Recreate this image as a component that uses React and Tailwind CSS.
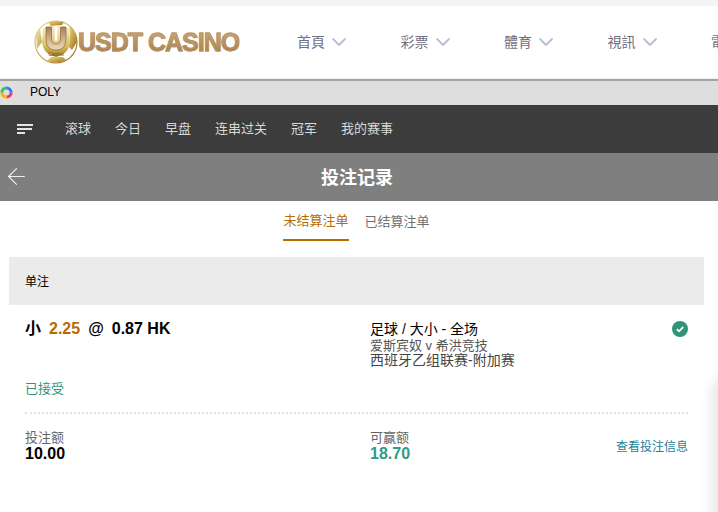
import React from 'react';
import { ChevronDown, ArrowLeft } from 'lucide-react';

const cjk = 'font-["Liberation_Sans","Noto_Sans_CJK_SC",sans-serif]';

const menu = ['首頁', '彩票', '體育', '視訊'];
const sports = ['滚球', '今日', '早盘', '连串过关', '冠军', '我的赛事'];

function Logo() {
  return (
    <div className="flex w-[206px] shrink-0 items-center">
      <svg width="44" height="44" viewBox="0 0 44 44" className="shrink-0">
        <defs>
          <linearGradient id="gold" x1="0" y1="0" x2="1" y2="1">
            <stop offset="0" stopColor="#ecd98f" />
            <stop offset="0.55" stopColor="#c4a245" />
            <stop offset="1" stopColor="#8c6a2a" />
          </linearGradient>
          <linearGradient id="inner" x1="0" y1="0" x2="0" y2="1">
            <stop offset="0" stopColor="#f7f0d8" />
            <stop offset="0.6" stopColor="#e0c264" />
            <stop offset="1" stopColor="#a98226" />
          </linearGradient>
          <linearGradient id="u" x1="0" y1="0" x2="0" y2="1">
            <stop offset="0" stopColor="#a9805a" />
            <stop offset="1" stopColor="#efdcc2" />
          </linearGradient>
        </defs>
        <circle cx="22" cy="22" r="21" fill="#fff" stroke="url(#gold)" strokeWidth="1.2" />
        <path d="M14 2 Q22 0 30 2 L28 5 L17 6 Z" fill="url(#gold)" />
        <path d="M2 16 L6 9 L8 22 L3 29 Z" fill="url(#gold)" opacity="0.7" />
        <path d="M35 5 Q42 12 43 22 L38 30 L34 26 L36 14 Z" fill="url(#gold)" />
        <path d="M13 41 L17 37 L29 37 L32 40 Q22 45 13 41 Z" fill="url(#gold)" />
        <path d="M9 8 Q22 3 35 8 L36 22 Q35 34 22 37 Q9 34 8 22 Z" fill="url(#inner)" />
        <path d="M12 7 L12 19 Q12 30 22 30 Q32 30 32 19 L32 7 L26.5 7 L26.5 19 Q26.5 24 22 24 Q17.5 24 17.5 19 L17.5 7 Z" fill="url(#u)" stroke="#7f5f2a" strokeWidth="0.6" />
        <rect x="20.7" y="6" width="2.6" height="15" rx="1" fill="#fff" />
        <text x="22" y="36" textAnchor="middle" fontSize="5" fill="#6b5a2a">Casino</text>
      </svg>
      <span className='bg-gradient-to-b from-[#cba97f] to-[#a67d4c] bg-clip-text font-["Liberation_Sans",sans-serif] text-[25px] leading-none font-bold tracking-[-1px] whitespace-nowrap text-transparent [-webkit-text-stroke:0.8px_#b8935f]'>
        USDT CASINO
      </span>
    </div>
  );
}

export default function App() {
  return (
    <div className={`relative h-[512px] w-[718px] overflow-hidden bg-white ${cjk}`}>
      <div className="h-1.5 bg-[#f4f4f4]" />

      {/* Site header */}
      <div className="flex h-[72px] items-center overflow-hidden pl-[34px]">
        <Logo />
        <div className="ml-[57px] flex shrink-0">
          {menu.map((m) => (
            <div key={m} className="flex w-[103.5px] items-center gap-0.5 text-sm text-[#6f6f80]">
              <span>{m}</span>
              <ChevronDown className="h-6 w-6 text-[#b9bdd6]" strokeWidth={1.8} />
            </div>
          ))}
          <div className="text-sm leading-6 whitespace-nowrap text-[#6f6f80]">電</div>
        </div>
      </div>

      <div className="h-[3px] border-b-2 border-[#a3a3a3] bg-[#efefef]" />

      {/* Iframe title */}
      <div className="flex h-6 items-center bg-[#dedede] pb-0.5">
        <svg width="13" height="13" viewBox="0 0 13 13" className="shrink-0">
          <circle cx="6.5" cy="6.5" r="4.6" fill="none" stroke="#ff2d6a" strokeWidth="3" strokeDasharray="7 22" />
          <circle cx="6.5" cy="6.5" r="4.6" fill="none" stroke="#ffb300" strokeWidth="3" strokeDasharray="7 22" strokeDashoffset="-7" />
          <circle cx="6.5" cy="6.5" r="4.6" fill="none" stroke="#35c843" strokeWidth="3" strokeDasharray="7 22" strokeDashoffset="-14" />
          <circle cx="6.5" cy="6.5" r="4.6" fill="none" stroke="#2f7bff" strokeWidth="3" strokeDasharray="8 22" strokeDashoffset="-21" />
        </svg>
        <span className="ml-[17px] text-xs text-black">POLY</span>
      </div>

      {/* Sports nav */}
      <div className="flex h-12 items-center bg-[#3c3c3c] pl-[17px] text-[#d8d8d8]">
        <div className="flex w-4 flex-col gap-0.5">
          <div className="h-0.5 w-4 bg-[#e4e4e4]" />
          <div className="h-0.5 w-[15px] bg-[#e4e4e4]" />
          <div className="h-0.5 w-2 bg-[#e4e4e4]" />
        </div>
        <div className="ml-8 flex gap-6 text-[13px]">
          {sports.map((s) => (
            <span key={s}>{s}</span>
          ))}
        </div>
      </div>

      {/* Title */}
      <div className="relative flex h-12 items-center justify-center bg-[#7f7f7f] pt-0.5 pr-1">
        <ArrowLeft className="absolute top-[10px] left-[3px] h-[27px] w-[27px] text-[#f0f0f0]" strokeWidth={1} />
        <span className="text-lg font-bold text-white">投注记录</span>
      </div>

      {/* Tabs */}
      <div className="flex h-10 justify-center gap-4 pr-[5px] text-[13px]">
        <div className="flex h-10 items-center border-b-2 border-[#b86b00] pt-0.5 text-[#b86b00]">未结算注单</div>
        <div className="flex h-10 items-center pt-0.5 text-[#6f6f6f]">已结算注单</div>
      </div>

      <div className="mt-4 ml-[9px] flex h-12 w-[695px] items-center bg-[#ebebeb] pt-0.5 pl-4 text-xs text-black">单注</div>

      {/* Bet card */}
      <div className="mr-[30px] ml-[25px]">
        <div className="flex pt-[15px]">
          <div className="flex h-[18px] w-[345px] items-center text-base font-bold text-black">
            <span>小</span>
            <span className="ml-2 text-[#b86b00]">2.25</span>
            <span className="ml-2">@</span>
            <span className="ml-2">0.87 HK</span>
          </div>
          <div className="flex-1 pt-0.5 text-sm leading-[15.5px] text-[#444]">
            <div className="text-black">足球 / 大小 - 全场</div>
            <div className="text-[13px] text-[#555]">爱斯宾奴 v 希洪竞技</div>
            <div>西班牙乙组联赛-附加赛</div>
          </div>
          <svg width="16" height="16" viewBox="0 0 16 16" className="mt-px shrink-0">
            <circle cx="8" cy="8" r="8" fill="#2f9478" />
            <path d="M4.8 8.2 L7 10.3 L11.2 6" fill="none" stroke="#fff" strokeWidth="1.8" />
          </svg>
        </div>

        <div className="mt-3 text-[13px] leading-4 text-[#2f9478]">已接受</div>

        <div className="mt-[15px] border-t-2 border-dotted border-[#e2e2e2]" />

        <div className="mt-4 flex items-center">
          <div className="w-[345px]">
            <div className="text-[13px] leading-[16px] text-[#666]">投注额</div>
            <div className="text-base leading-[16px] font-bold text-black">10.00</div>
          </div>
          <div className="flex-1">
            <div className="text-[13px] leading-[16px] text-[#666]">可赢额</div>
            <div className="text-base leading-[16px] font-bold text-[#2f9a85]">18.70</div>
          </div>
          <div className="pt-0.5 text-xs text-[#1f7f9c]">查看投注信息</div>
        </div>
      </div>

      {/* Shadow of the panel at the right edge */}
      <div className="absolute top-[385px] -right-3 h-[140px] w-3 rounded-full shadow-[0_0_12px_7px_rgba(0,0,0,0.09)]" />
    </div>
  );
}
